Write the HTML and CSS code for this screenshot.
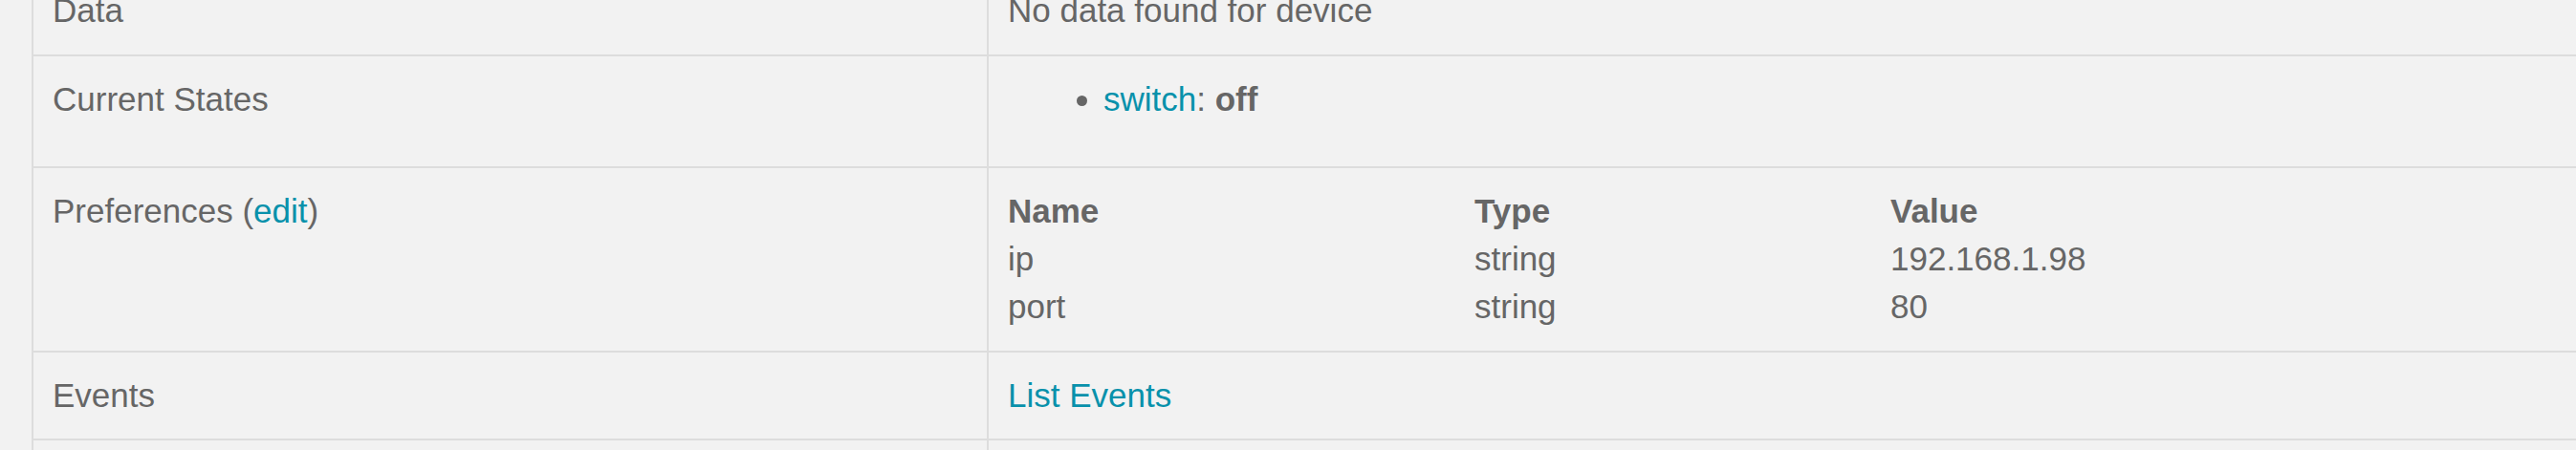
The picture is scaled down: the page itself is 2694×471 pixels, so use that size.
FILE: index.html
```html
<!DOCTYPE html>
<html lang="en">
<head>
    <meta charset="UTF-8">
    <meta name="viewport" content="width=device-width, initial-scale=1.0">
    <title>Device Details</title>
    <link rel="stylesheet" href="styles.css">
</head>
<body>
    <div class="page">
        <table class="details">
            <tbody>
                <tr>
                    <td class="label">Data</td>
                    <td>No data found for device</td>
                </tr>
                <tr>
                    <td class="label">Current States</td>
                    <td>
                        <ul class="states">
                            <li><a href="#">switch</a>: <b>off</b></li>
                        </ul>
                    </td>
                </tr>
                <tr>
                    <td class="label">Preferences (<a href="#">edit</a>)</td>
                    <td>
                        <table class="prefs">
                            <thead>
                                <tr>
                                    <th class="col-name">Name</th>
                                    <th class="col-type">Type</th>
                                    <th>Value</th>
                                </tr>
                            </thead>
                            <tbody>
                                <tr>
                                    <td>ip</td>
                                    <td>string</td>
                                    <td>192.168.1.98</td>
                                </tr>
                                <tr>
                                    <td>port</td>
                                    <td>string</td>
                                    <td>80</td>
                                </tr>
                            </tbody>
                        </table>
                    </td>
                </tr>
                <tr>
                    <td class="label">Events</td>
                    <td><a href="#">List Events</a></td>
                </tr>
                <tr>
                    <td class="label">Scheduled Jobs</td>
                    <td>No scheduled jobs</td>
                </tr>
            </tbody>
        </table>
    </div>
</body>
</html>
```
FILE: styles.css
```css
html, body {
    margin: 0;
    background-color: #f2f2f2;
    overflow: hidden;
}
body {
    font-family: "Liberation Sans", Arial, sans-serif;
    font-size: 35px;
    line-height: 50px;
    color: #666;
}
a {
    color: #0891ab;
    text-decoration: none;
}
.page {
    margin-top: -36px;
    padding-left: 33px;
}
.details {
    width: 2800px;
    border-collapse: collapse;
}
.details > tbody > tr > td {
    padding: 20px 20px 20.5px;
    border: 2.5px solid #ddd;
    vertical-align: top;
    text-align: left;
}
.details td.label {
    width: 957px;
}
.states {
    margin: 0 0 25px;
    padding-left: 100px;
}
.prefs {
    border-collapse: collapse;
}
.prefs th, .prefs td {
    padding: 0;
    text-align: left;
    vertical-align: top;
}
.prefs th {
    font-weight: bold;
}
.prefs .col-name {
    width: 488px;
}
.prefs .col-type {
    width: 435px;
}
```
